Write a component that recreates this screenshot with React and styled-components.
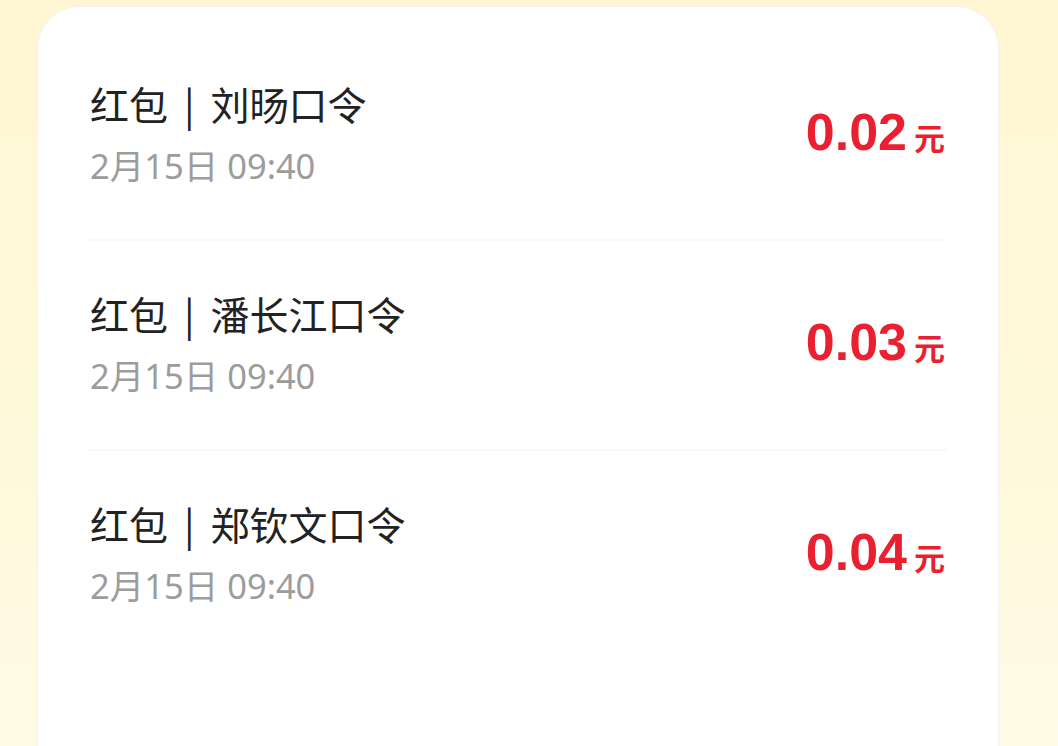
import React from "react";
import styled, { createGlobalStyle } from "styled-components";

const Global = createGlobalStyle`
  html, body { margin: 0; padding: 0; }
  body {
    width: 1058px;
    height: 746px;
    overflow: hidden;
    background: linear-gradient(180deg, #fff7d3 0%, #fff8d8 50%, #fffbe6 100%);
  }
`;

const Page = styled.div`
  height: 746px;
  padding: 6px 59px 0 37px;
  box-sizing: border-box;
  overflow: hidden;
`;

const Card = styled.div`
  background: #fff;
  border: 1px solid #f1f1f5;
  border-radius: 42px;
  height: 820px;
  padding: 24px 51px 0 50px;
  box-sizing: border-box;
`;

const Row = styled.div`
  height: 208px;
  display: flex;
  align-items: center;
  justify-content: space-between;
  border-bottom: 2px solid ${(p) => (p.$last ? "transparent" : "#fdf7ef")};
`;

const Info = styled.div`
  display: flex;
  flex-direction: column;
  padding-left: 2px;
  padding-bottom: 6px;
`;

const Title = styled.div`
  font-family: "Noto Sans CJK SC", sans-serif;
  font-size: 39px;
  line-height: 50px;
  color: #222;
  display: flex;
  align-items: center;
`;

const Sep = styled.span`
  margin: 0 16px;
  font-family: "Noto Sans CJK SC", sans-serif;
`;

const DateText = styled.div`
  font-family: "Noto Sans", "Noto Sans CJK SC", sans-serif;
  font-size: 34.5px;
  line-height: 42px;
  color: #9c9c9c;
  margin-top: 17px;
`;

const Amount = styled.div`
  display: flex;
  align-items: baseline;
  color: #ea1f30;
  font-weight: bold;
  margin: -6px 2px 0 0;
`;

const Value = styled.span`
  font-family: "Liberation Sans", Arial, sans-serif;
  font-size: 52px;
`;

const Unit = styled.span`
  font-family: "Noto Sans CJK SC", sans-serif;
  font-size: 31px;
  margin-left: 7px;
`;

const items = [
  { name: "刘旸口令", amount: "0.02" },
  { name: "潘长江口令", amount: "0.03" },
  { name: "郑钦文口令", amount: "0.04" },
];

export default function App() {
  return (
    <>
      <Global />
      <Page>
        <Card>
          {items.map((it, i) => (
            <Row key={i} $last={i === items.length - 1}>
              <Info>
                <Title>
                  <span>红包</span>
                  <Sep>|</Sep>
                  <span>{it.name}</span>
                </Title>
                <DateText>2月15日 09:40</DateText>
              </Info>
              <Amount>
                <Value>{it.amount}</Value>
                <Unit>元</Unit>
              </Amount>
            </Row>
          ))}
        </Card>
      </Page>
    </>
  );
}
